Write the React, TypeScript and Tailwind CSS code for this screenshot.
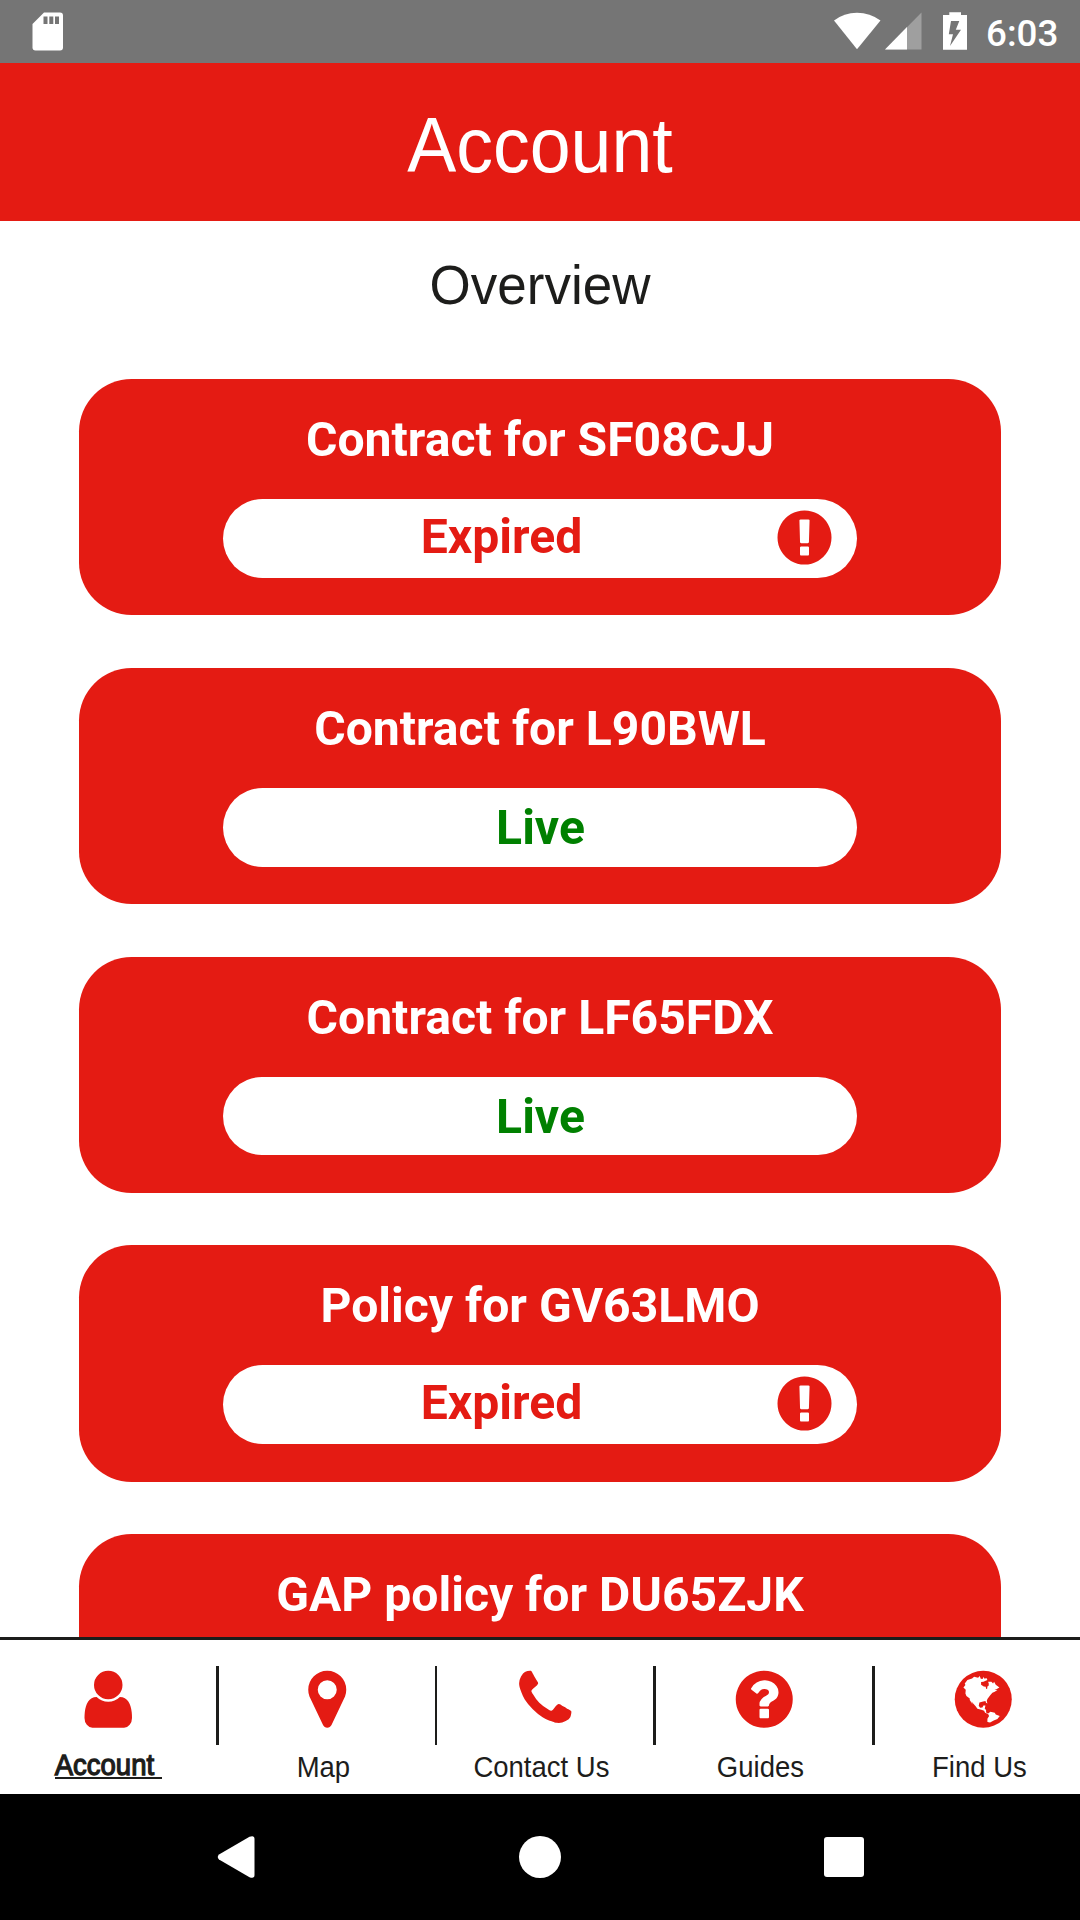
import React from "react";

type Status = "Expired" | "Live";

const policies: { title: string; status: Status }[] = [
  { title: "Contract for SF08CJJ", status: "Expired" },
  { title: "Contract for L90BWL", status: "Live" },
  { title: "Contract for LF65FDX", status: "Live" },
  { title: "Policy for GV63LMO", status: "Expired" },
  { title: "GAP policy for DU65ZJK", status: "Live" },
];

const icons = {
  alert:
    "M896 128q209 0 385.500 103t279.500 279.500 103 385.500-103 385.500-279.500 279.500-385.500 103-385.500-103-279.500-279.500-103-385.500 103-385.500 279.500-279.500 385.500-103zm128 1247v-190q0-14-9-23.500t-22-9.500h-192q-13 0-23 10t-10 23v190q0 13 10 23t23 10h192q13 0 22-9.500t9-23.500zm-2-344l18-621q0-12-10-18-10-8-24-8h-220q-14 0-24 8-10 6-10 18l17 621q0 10 10 17.500t24 7.500h185q14 0 23.500-7.500t10.500-17.500z",
  user:
    "M1536 1399q0 109-62.500 187t-150.500 78h-854q-88 0-150.500-78t-62.500-187q0-85 8.500-160.500t31.500-152 58.500-131 94-89 134.500-34.500q131 128 313 128t313-128q76 0 134.500 34.500t94 89 58.500 131 31.500 152 8.500 160.500zm-256-887q0 159-112.500 271.500t-271.500 112.500-271.500-112.500-112.500-271.500 112.500-271.500 271.500-112.500 271.500 112.500 112.500 271.500z",
  pin:
    "M1152 640q0-106-75-181t-181-75-181 75-75 181 75 181 181 75 181-75 75-181zm256 0q0 109-33 179l-364 774q-16 33-47.500 52t-67.500 19-67.500-19-46.500-52l-365-774q-33-70-33-179 0-212 150-362t362-150 362 150 150 362z",
  phone:
    "M1600 1240q0 27-10 70.500t-21 68.500q-21 50-122 106-94 51-186 51-27 0-53-3.500t-57.500-12.500-47-14.500-55.500-20.500-49-18q-98-35-175-83-127-79-264-216t-216-264q-48-77-83-175-3-9-18-49t-20.500-55.500-14.500-47-12.500-57.500-3.500-53q0-92 51-186 56-101 106-122 25-11 68.500-21t70.500-10q14 0 21 3 18 6 53 76 11 19 30 54t35 63.500 31 53.500q3 4 17.500 25t21.500 35.500 7 28.500q0 20-28.500 50t-62 55-62 53-28.500 46q0 9 5 22.500t8.500 20.500 14 24 11.500 19q76 137 174 235t235 174q2 1 19 11.500t24 14 20.500 8.500 22.500 5q18 0 46-28.500t53-62 55-62 50-28.500q14 0 28.500 7t35.500 21.500 25 17.500q25 15 53.500 31t63.500 35 54 30q70 35 76 53 3 7 3 21z",
  question:
    "M1024 1376v-192q0-14-9-23t-23-9h-192q-14 0-23 9t-9 23v192q0 14 9 23t23 9h192q14 0 23-9t9-23zm256-672q0-88-55.500-163t-138.500-116-170-41q-243 0-371 213-15 24 8 42l132 100q7 6 19 6 16 0 25-12 53-68 86-92 34-24 86-24 48 0 85.500 26t37.500 59q0 38-20 61t-68 45q-63 28-115.500 86.500t-52.500 125.500v36q0 14 9 23t23 9h192q14 0 23-9t9-23q0-19 21.500-49.500t54.500-49.500q32-18 49-28.500t46-35 44.500-48 28-60.500 12.500-81zm384 192q0 209-103 385.500t-279.500 279.500-385.500 103-385.500-103-279.500-279.500-103-385.500 103-385.500 279.500-279.500 385.500-103 385.500 103 279.500 279.500 103 385.500z",
};

function Icon({ d, className }: { d: string; className: string }) {
  return (
    <svg viewBox="0 0 1792 1792" className={className} fill="currentColor">
      <path d={d} />
    </svg>
  );
}

function Globe({ className }: { className: string }) {
  return (
    <svg viewBox="-14.250 -14.250 199.500 199.500" className={className}>
      <circle cx="85.500" cy="85.500" r="85.500" fill="currentColor" />
      <path
        fill="#fff"
        d="M26 50 32 43 30 38 38 28 52 23 58 18 70 21 75 16 78 24 84 25 85 19 90 24 95 22 98 28 91 31 86 33 79 34 79 42 87 47 93 48 94 54 97 55 98 47 102 44 102 38 100 33 110 33 115 38 118 33 123 42 134 50 126 55 119 56 128 58 120 63 113 66 107 73 103 78 98 85 96 91 98 98 94 96 92 91 82 93 74 95 72 105 76 111 83 110 86 104 92 104 90 114 94 118 94 125 100 128 107 123 120 126 123 131 135 136 128 145 117 149 106 155 98 154 98 144 103 136 100 130 91 126 88 120 80 117 68 114 62 106 50 92 54 102 45 88 45 83 35 76 32 68 33 57Z"
      />
    </svg>
  );
}

function StatusBar() {
  return (
    <div className="flex h-[63px] shrink-0 items-start bg-[#757575] text-white">
      <svg className="ml-[32px] mt-[12px] h-[39px] w-[32px]" viewBox="0 0 32 39">
        <path fill="currentColor" d="M12 .500H28Q31 .500 31 3.500V35.500Q31 38.500 28 38.500H3.500Q.500 38.500 .500 35.500V12Z" />
        <path fill="#757575" d="M11.500 4.500h4V12h-4zM17.300 4.500h4V12h-4zM23 4.500h4V12h-4z" />
      </svg>
      <svg className="ml-auto mt-[12px] h-[38px] w-[47px]" viewBox="0 0 47 38">
        <path fill="currentColor" d="M0 8.500Q10 .700 23 .700T46.500 8.500L23 37.300Z" />
      </svg>
      <svg className="ml-[4px] mt-[12px] h-[38px] w-[37px]" viewBox="0 0 37 38">
        <path fill="#9f9f9f" d="M36.500.500V37.500H0Z" />
        <path fill="currentColor" d="M22 15V37.500H0Z" />
      </svg>
      <svg className="ml-[21px] mt-[12px] h-[38px] w-[24px]" viewBox="0 0 24 38">
        <path fill="currentColor" d="M6.300.300H18V3H24V37.700H0V3H6.300Z" />
        <path fill="#757575" d="M8 9H16.300L12.800 17.800H18L7 34 10 22.300H5.800Z" />
      </svg>
      <span className="ml-[19px] mr-[22px] mt-[12px] w-[72px] font-[Roboto,sans-serif] text-[36.750px] font-medium leading-[44px]">
        6:03
      </span>
    </div>
  );
}

function PolicyCard({ title, status }: { title: string; status: Status }) {
  return (
    <div className="h-[236.250px] shrink-0 rounded-[52.500px] bg-[#e41b13] px-[144px] pt-[33px] text-center font-[Roboto,sans-serif] text-[48.100px] font-bold leading-[56px]">
      <h2 className="-mx-[100px] text-white">{title}</h2>
      <div className="mt-[31px] flex h-[78.750px] items-start rounded-full bg-white">
        {status === "Expired" ? (
          <>
            <span className="ml-[76px] mt-[10px] w-[405px] text-[#e41b13]">{status}</span>
            <Icon d={icons.alert} className="ml-[69.300px] mt-[7px] h-[63px] w-[63px] text-[#e41b13]" />
          </>
        ) : (
          <span className="mt-[12px] w-full pl-[1px] text-[#008000]">{status}</span>
        )}
      </div>
    </div>
  );
}

const tabIcon = "h-[66.500px] w-[66.500px] text-[#e41b13]";

const tabs: { label: string; icon: React.ReactNode; active?: boolean; divider?: string }[] = [
  { label: "Account", icon: <Icon d={icons.user} className={tabIcon} />, active: true, divider: "w-[3px]" },
  { label: "Map", icon: <Icon d={icons.pin} className={tabIcon} />, divider: "w-[2px]" },
  { label: "Contact Us", icon: <Icon d={icons.phone} className={tabIcon} />, divider: "w-[3px]" },
  { label: "Guides", icon: <Icon d={icons.question} className={tabIcon} />, divider: "w-[3px]" },
  { label: "Find Us", icon: <Globe className={tabIcon} /> },
];

function TabBar() {
  return (
    <nav className="flex h-[157px] shrink-0 overflow-hidden border-t-[3px] border-[#1d1d1b] bg-white pt-[26px] text-[27.500px] text-[#1d1d1b]">
      {tabs.map(({ label, icon, active, divider }) => (
        <React.Fragment key={label}>
          <div className="flex w-[216px] shrink-0 flex-col items-center pl-[0.500px] pt-[0.250px]">
            {icon}
            {active ? (
              <span className="mt-[16.250px] h-[30px] whitespace-pre border-b-2 border-[#1d1d1b] leading-[34px]">
                <span className="block origin-[50%_27px] scale-y-[1.06] [-webkit-text-stroke:1.200px_#1d1d1b]">
                  {label + " "}
                </span>
              </span>
            ) : (
              <span className="mt-[17.250px] origin-[50%_28px] scale-y-[1.06] whitespace-pre leading-[36px]">
                {label + " "}
              </span>
            )}
          </div>
          {divider && <div className={"h-[79px] shrink-0 bg-[#1d1d1b] " + divider} />}
        </React.Fragment>
      ))}
    </nav>
  );
}

function SystemNav() {
  return (
    <div className="flex h-[126px] shrink-0 items-center bg-black text-white">
      <svg className="ml-[217px] h-[42px] w-[38px]" viewBox="0 0 38 42">
        <path fill="currentColor" d="M2 18.500 32.500 .800Q37.500-1 37.500 3V39Q37.500 43 32.500 41.200L2 23.500Q-.500 21 2 18.500Z" />
      </svg>
      <div className="ml-[264px] h-[42px] w-[42px] rounded-full bg-white" />
      <div className="ml-[263px] h-[40px] w-[40px] rounded-[3px] bg-white" />
    </div>
  );
}

export default function App() {
  return (
    <div className="flex h-[1920px] w-[1080px] flex-col overflow-hidden bg-white font-['Liberation_Sans',Arial,sans-serif]">
      <StatusBar />
      <header className="flex h-[158px] shrink-0 justify-center bg-[#e41b13] pt-[42px] text-[73.500px] leading-[84px] text-white">
        <h1 className="origin-[50%_67px] scale-y-[1.06]">Account</h1>
      </header>
      <main className="flex min-h-0 flex-1 flex-col overflow-hidden">
        <h2 className="mt-[35px] shrink-0 origin-[50%_48px] scale-y-[1.06] text-center text-[53px] leading-[60px] text-[#1d1d1b]">
          Overview
        </h2>
        <div className="mt-[63px] flex flex-col gap-[52.500px] px-[79px]">
          {policies.map((p) => (
            <PolicyCard key={p.title} {...p} />
          ))}
        </div>
      </main>
      <TabBar />
      <SystemNav />
    </div>
  );
}
